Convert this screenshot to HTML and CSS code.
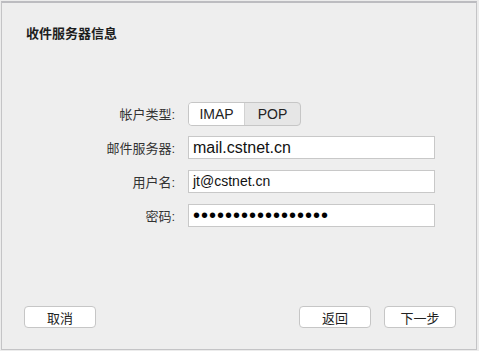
FILE: index.html
```html
<!DOCTYPE html>
<html lang="zh-CN">
<head>
    <meta charset="UTF-8">
    <title>收件服务器信息</title>
    <link rel="stylesheet" href="styles.css">
</head>
<body>
    <div class="dialog">
        <h1 class="title">收件服务器信息</h1>
        <div class="form">
            <div class="row">
                <label class="label">帐户类型:</label>
                <div class="segmented">
                    <span class="seg active">IMAP</span>
                    <span class="seg">POP</span>
                </div>
            </div>
            <div class="row">
                <label class="label">邮件服务器:</label>
                <div class="field big">mail.cstnet.cn</div>
            </div>
            <div class="row">
                <label class="label">用户名:</label>
                <div class="field">jt@cstnet.cn</div>
            </div>
            <div class="row">
                <label class="label">密码:</label>
                <div class="field dots">•••••••••••••••••</div>
            </div>
        </div>
        <div class="buttons">
            <button class="btn">取消</button>
            <div class="spacer"></div>
            <button class="btn">返回</button>
            <button class="btn">下一步</button>
        </div>
    </div>
</body>
</html>
```

FILE: styles.css
```css
html, body {
    margin: 0;
    padding: 0;
    background: #ececec;
}
body {
    font-family: "Liberation Sans", "Noto Sans CJK SC", sans-serif;
    color: #222;
    padding: 1px 2px 1px 1px;
    width: 479px;
    height: 351px;
    box-sizing: border-box;
}
.dialog {
    height: 100%;
    box-sizing: border-box;
    border: 1px solid #c4c4c6;
    border-top: 2px solid #bcbcc0;
    background: #eeeeee;
    display: flex;
    flex-direction: column;
    padding: 0 20px 0 22px;
}
.title {
    margin: 22px 0 0 2px;
    font-size: 13px;
    font-weight: bold;
    color: #1e1e1e;
    line-height: 18px;
}
.form {
    margin-top: 59px;
    display: flex;
    flex-direction: column;
    gap: 11px;
}
.row {
    display: flex;
    align-items: center;
    height: 23px;
}
.label {
    width: 151px;
    text-align: right;
    font-size: 13px;
    color: #333;
    padding-right: 13px;
    box-sizing: content-box;
}
.segmented {
    display: flex;
    height: 22px;
    border: 1px solid #c6c6c6;
    border-radius: 4px;
    overflow: hidden;
    background: #e6e6e6;
}
.seg {
    width: 55px;
    text-align: center;
    font-size: 14px;
    line-height: 22px;
    color: #222;
}
.seg.active {
    background: #fff;
    border-right: 1px solid #d2d2d2;
}
.field {
    width: 241px;
    height: 21px;
    border: 1px solid #c8c8c8;
    background: #fff;
    font-size: 14px;
    line-height: 21px;
    padding-left: 4px;
    color: #111;
    overflow: hidden;
    white-space: nowrap;
}
.field.big {
    font-size: 16px;
}
.dots {
    font-size: 20px;
    letter-spacing: 1px;
    color: #000;
}
.buttons {
    margin-top: auto;
    margin-bottom: 21px;
    display: flex;
    gap: 13px;
}
.spacer {
    flex: 1;
}
.btn {
    width: 72px;
    height: 22px;
    background: #fff;
    border: 1px solid #c6c6c6;
    border-radius: 4px;
    font-family: "Noto Sans CJK SC", sans-serif;
    font-size: 13px;
    color: #222;
    padding: 0;
}
```
